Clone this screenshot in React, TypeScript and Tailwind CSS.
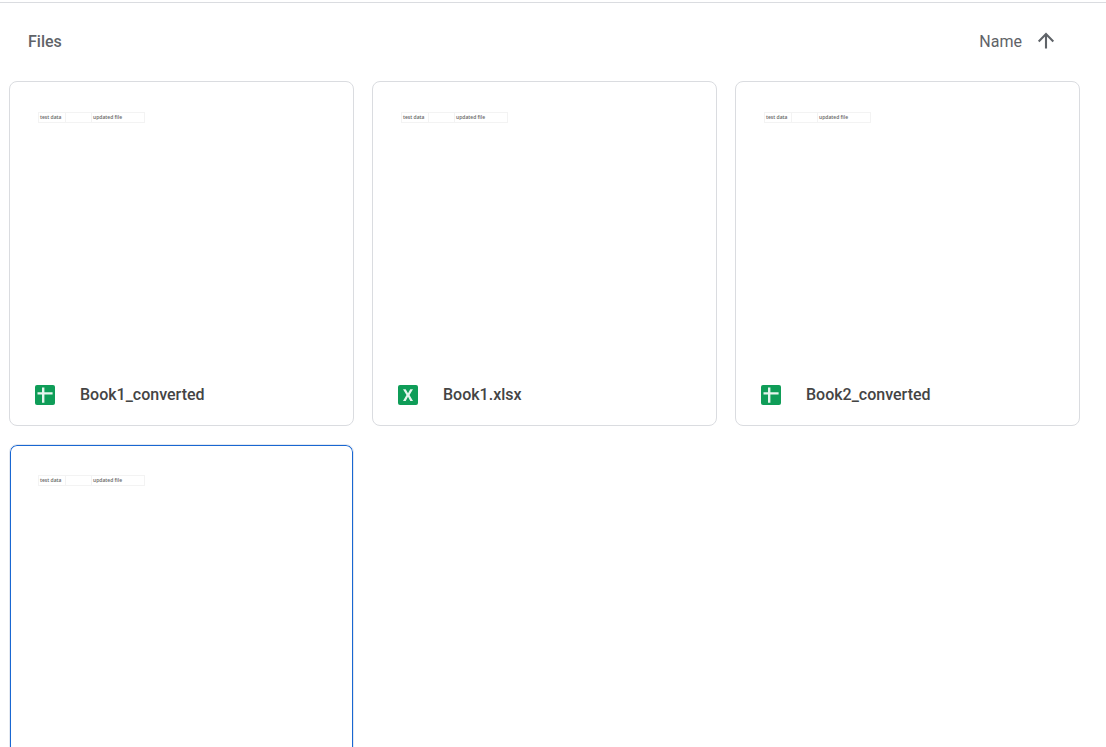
import React, { useState } from 'react'
import clsx from 'clsx'

type FileKind = 'sheet' | 'excel'

interface DriveFile {
  id: string
  kind?: FileKind
  name?: string
}

const FILES: DriveFile[] = [
  { id: 'a', kind: 'sheet', name: 'Book1_converted' },
  { id: 'b', kind: 'excel', name: 'Book1.xlsx' },
  { id: 'c', kind: 'sheet', name: 'Book2_converted' },
  { id: 'd' },
]

const FileIcon: React.FC<{ kind: FileKind }> = ({ kind }) => (
  <svg viewBox="0 0 20 20" className="size-5 shrink-0" aria-hidden="true">
    <rect width="20" height="20" rx="2" fill="#0f9d58" />
    {kind === 'sheet' ? (
      <path d="M2.5 7.2H7V2.5h2.4v4.7h8.2v2.2H9.4v8.4H7V9.4H2.5z" fill="#fff" fillOpacity=".9" />
    ) : (
      <path
        d="M5 4.3h2.7L10 8.3l2.3-4h2.7L11.5 10l3.5 5.9h-2.7L10 11.8l-2.3 4.1H5L8.5 10z"
        fill="#fff"
        fillOpacity=".9"
      />
    )}
  </svg>
)

// First rows of the spreadsheet, shrunk to preview size.
const SheetPreview: React.FC = () => (
  <table className="ml-7 mt-[30px] w-[107px] table-fixed border-collapse font-['Open_Sans','Noto_Sans',sans-serif] text-[5px] font-semibold leading-[9px] text-[#666]">
    <tbody>
      <tr className="h-[10px]">
        <td className="w-[27px] whitespace-nowrap border border-[#f3f3f3] px-px py-0">test data</td>
        <td className="w-[26px] border border-[#f3f3f3] p-0" />
        <td className="whitespace-nowrap border border-[#f3f3f3] px-px py-0">updated file</td>
      </tr>
    </tbody>
  </table>
)

const FileCard: React.FC<{ file: DriveFile; selected: boolean; onSelect: () => void }> = ({
  file,
  selected,
  onSelect,
}) => (
  <article
    onClick={onSelect}
    className={clsx(
      'flex aspect-square flex-col justify-between rounded-lg border bg-white',
      selected ? 'border-[#e3e8f0] inset-ring inset-ring-[#1967d2]' : 'border-[#dadce0]',
    )}
  >
    <SheetPreview />
    {file.kind && (
      <div className="flex h-[61px] items-center gap-[25px] px-[25px]">
        <FileIcon kind={file.kind} />
        <h3 className="truncate text-base font-medium text-[#444]">{file.name}</h3>
      </div>
    )}
  </article>
)

export default function App() {
  const [selectedId, setSelectedId] = useState('d')
  const [ascending, setAscending] = useState(true)
  const files = ascending ? FILES : [...FILES].reverse()

  return (
    <main className="h-screen overflow-hidden bg-white pt-0.5 font-[Roboto,sans-serif]">
      <header className="flex h-[79px] items-center justify-between border-t border-[#dadce0] pl-7 pr-12">
        <h2 className="text-base font-medium text-[#5f6368]">Files</h2>
        <button
          type="button"
          onClick={() => setAscending(!ascending)}
          className="flex items-center gap-3 text-base text-[#5f6368]"
        >
          Name
          <svg
            viewBox="0 0 24 24"
            className={clsx('size-6', !ascending && 'rotate-180')}
            fill="none"
            stroke="currentColor"
            strokeWidth="2.1"
            aria-hidden="true"
          >
            <path d="M4.7 11.4L12 4.1l7.3 7.3M12 4.5V18.5" />
          </svg>
        </button>
      </header>
      <section aria-label="Files" className="grid grid-cols-3 gap-[18px] pl-[9px] pr-[26px]">
        {files.map((file) => (
          <FileCard
            key={file.id}
            file={file}
            selected={file.id === selectedId}
            onSelect={() => setSelectedId(file.id)}
          />
        ))}
      </section>
    </main>
  )
}
